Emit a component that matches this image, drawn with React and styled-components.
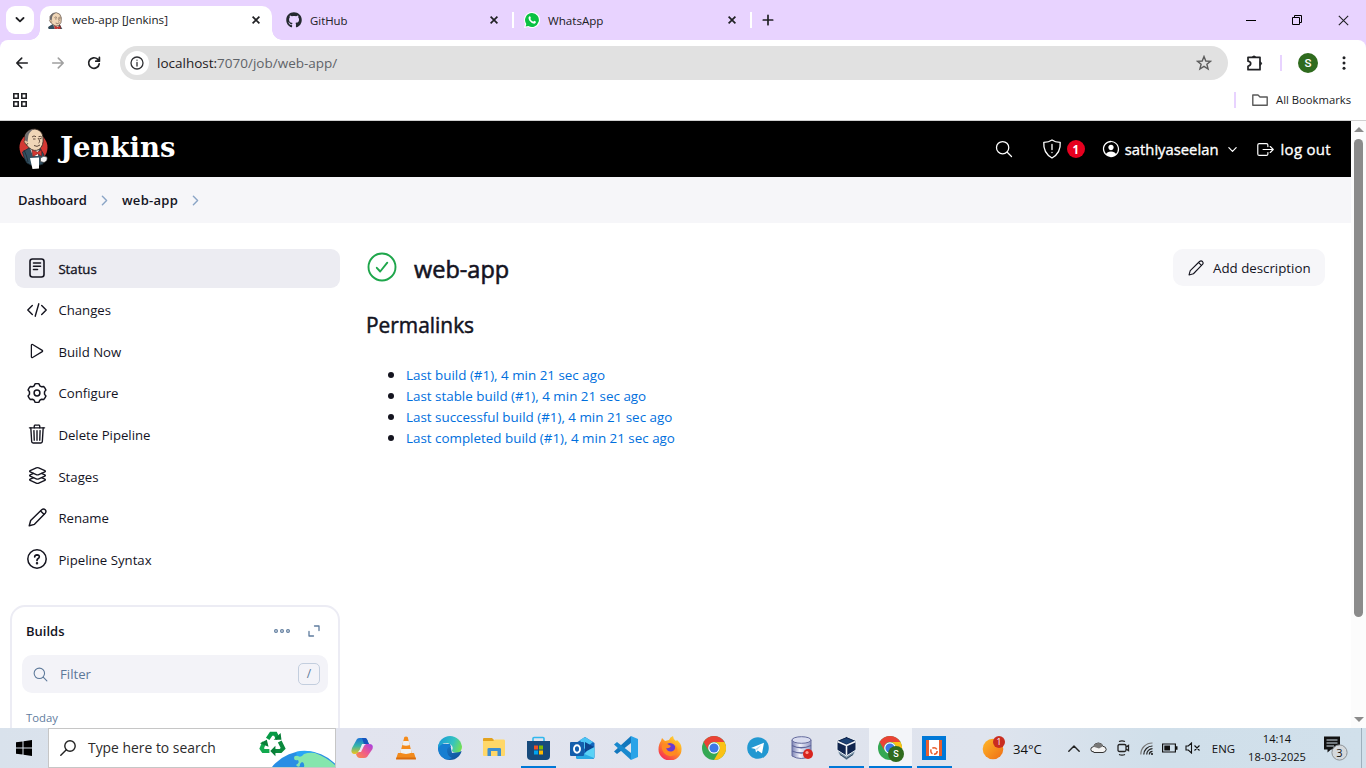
import React from 'react';
import styled, { createGlobalStyle } from 'styled-components';
import { FaGithub } from 'react-icons/fa';
import {
  IoPlayOutline, IoTrashOutline, IoLayersOutline, IoSearchOutline,
  IoPersonCircleOutline, IoExitOutline, IoChevronForward, IoChevronDown,
} from 'react-icons/io5';

const Global = createGlobalStyle`
  * { box-sizing: border-box; }
  body { margin: 0; overflow: hidden; background: #fff; font-family: "Open Sans", "Noto Sans", sans-serif; color: #14141f; }
  svg { display: block; flex: none; }
`;

const Screen = styled.div`
  width: 1366px;
  height: 768px;
  display: flex;
  flex-direction: column;
  overflow: hidden;
`;

const Text = styled.span`
  font-size: ${(p) => p.$size || 13.2}px;
  font-weight: ${(p) => p.$weight || 400};
  color: ${(p) => p.$color || 'inherit'};
  letter-spacing: ${(p) => p.$track || 0}px;
  -webkit-text-stroke: ${(p) => (p.$medium ? '0.35px currentColor' : '0')};
  padding-top: ${(p) => p.$drop || 0}px;
  line-height: 1.35;
  white-space: nowrap;
`;

const Spacer = styled.div`
  flex: 1;
`;

/* ---------- Browser chrome ---------- */

const TabStrip = styled.div`
  height: 40px;
  flex: none;
  background: #e8d3ff;
  display: flex;
  align-items: center;
  padding-left: 6px;
`;

const TabSearch = styled.div`
  width: 28px;
  height: 28px;
  border-radius: 9px;
  background: #fff;
  display: grid;
  place-items: center;
  margin-right: 6px;
`;

const Tab = styled.div`
  width: ${(p) => p.$w}px;
  height: ${(p) => (p.$active ? 34 : 40)}px;
  align-self: flex-end;
  display: flex;
  align-items: center;
  padding: ${(p) => (p.$active ? '0 12px 6px 8px' : `0 14px 0 ${p.$pl}px`)};
  background: ${(p) => (p.$active ? '#fff' : 'transparent')};
  border-radius: 10px 10px 0 0;
  position: relative;
  gap: 8px;
  ${(p) => p.$active && `
    &::before, &::after {
      content: '';
      position: absolute;
      bottom: 0;
      width: 10px;
      height: 10px;
    }
    &::before { left: -10px; background: radial-gradient(circle at 0 0, transparent 9.5px, #fff 10px); }
    &::after { right: -10px; background: radial-gradient(circle at 100% 0, transparent 9.5px, #fff 10px); }
  `}
`;

const TabDivider = styled.div`
  width: 2px;
  height: 16px;
  background: ${(p) => p.$color || '#fff'};
`;

const WindowButtons = styled.div`
  display: flex;
`;

const WindowButton = styled.div`
  width: 46px;
  height: 40px;
  display: grid;
  place-items: center;
`;

const ToolbarWrap = styled.div`
  background: #e8d3ff;
  flex: none;
`;

const Toolbar = styled.div`
  height: 46px;
  background: #fff;
  border-radius: 8px 8px 0 0;
  display: flex;
  align-items: center;
  padding: 0 14px;
`;

const NavButtons = styled.div`
  display: flex;
  gap: 20px;
  width: 106px;
`;

const AddressBar = styled.div`
  width: 1108px;
  height: 34px;
  border-radius: 17px;
  background: #e1e1e1;
  display: flex;
  align-items: center;
  padding: 0 16px 0 5px;
`;

const SiteInfo = styled.div`
  width: 24px;
  height: 24px;
  border-radius: 50%;
  background: #fff;
  display: grid;
  place-items: center;
  margin-right: 8px;
`;

const Avatar = styled.div`
  width: ${(p) => p.$d}px;
  height: ${(p) => p.$d}px;
  border-radius: 50%;
  background: #2f6b1e;
  color: #fff;
  display: grid;
  place-items: center;
  font: 500 ${(p) => p.$fs}px Roboto, sans-serif;
`;

const ToolbarActions = styled.div`
  display: flex;
  align-items: center;
  margin-left: 18px;
`;

const BookmarkBar = styled.div`
  height: 35px;
  flex: none;
  border-bottom: 1px solid #d0d0d0;
  display: flex;
  align-items: center;
  padding: 0 15px 6px 13px;
`;

const AllBookmarks = styled.div`
  display: flex;
  align-items: center;
  gap: 8px;
  margin-left: 16px;
`;

/* ---------- Page ---------- */

const Viewport = styled.div`
  height: 607px;
  flex: none;
  display: flex;
  overflow: hidden;
`;

const Page = styled.div`
  width: 1351px;
  height: 607px;
  overflow: hidden;
  display: flex;
  flex-direction: column;
`;

const Scrollbar = styled.div`
  width: 15px;
  background: #fcfcfc;
  display: flex;
  flex-direction: column;
  align-items: center;
  padding: 6px 0 6px;
`;

const Thumb = styled.div`
  width: 9px;
  height: 478px;
  border-radius: 5px;
  background: #8b8b8b;
  margin-top: 7px;
`;

const Header = styled.header`
  height: 56px;
  flex: none;
  background: #000;
  color: #fff;
  display: flex;
  align-items: center;
  padding: 0 20px 0 18px;
`;

const Brand = styled.div`
  display: flex;
  align-items: center;
  gap: 12px;
`;

const Wordmark = styled.span`
  font-family: "DejaVu Serif", serif;
  font-weight: 700;
  font-size: 27.5px;
  letter-spacing: 0;
  line-height: 30px;
  padding-bottom: 4px;
`;

const HeaderGroup = styled.div`
  display: flex;
  align-items: center;
  gap: ${(p) => p.$gap}px;
  margin-left: ${(p) => p.$ml}px;
`;

const Alert = styled.span`
  width: 18px;
  height: 18px;
  border-radius: 50%;
  background: #e6001f;
  display: grid;
  place-items: center;
  font-size: 11.5px;
  font-weight: 700;
`;

const Breadcrumbs = styled.nav`
  height: 46px;
  flex: none;
  background: #f6f6f9;
  display: flex;
  align-items: center;
  padding-left: 18px;
  gap: 10px;
`;

const Body = styled.div`
  display: flex;
  flex: 1;
  padding-top: 26px;
`;

const Sidebar = styled.aside`
  width: 340px;
  flex: none;
`;

const Tasks = styled.div`
  display: flex;
  flex-direction: column;
  gap: 2.6px;
  padding-left: 15px;
`;

const Task = styled.div`
  height: 39px;
  border-radius: 9px;
  background: ${(p) => (p.$active ? '#ececf2' : 'transparent')};
  display: flex;
  align-items: center;
  padding-left: 11px;
  gap: 10.4px;
`;

const TaskIcon = styled.span`
  width: 22px;
  height: 22px;
  display: grid;
  place-items: center;
  margin-bottom: 1px;
`;

const BuildsCard = styled.section`
  margin: 26px 0 0 10px;
  width: 330px;
  height: 200px;
  border: 2px solid #ececf4;
  border-radius: 15px;
  padding: 15px 10px;
`;

const BuildsHead = styled.div`
  height: 20px;
  display: flex;
  align-items: center;
  padding: 0 8px 0 4px;
  color: #5f7c9e;
`;

const HeadActions = styled.div`
  display: flex;
  align-items: center;
  gap: 18px;
  padding-bottom: 3px;
`;

const Filter = styled.div`
  height: 38px;
  margin: 13px 0 14px;
  border-radius: 10px;
  background: #f3f3f8;
  color: #5c7899;
  display: flex;
  align-items: center;
  padding: 0 8px 0 10px;
`;

const Key = styled.span`
  width: 22px;
  height: 22px;
  border: 1px solid #c3cede;
  border-radius: 5px;
  display: grid;
  place-items: center;
`;

const Indent = styled.div`
  padding-left: 4px;
  line-height: 18px;
`;

const Main = styled.main`
  flex: 1;
  padding: 0 26px 0 26px;
`;

const TitleRow = styled.div`
  height: 37px;
  display: flex;
  align-items: center;
`;

const StatusIcon = styled.span`
  padding-bottom: 2px;
`;

const Title = styled.h1`
  font-size: 23.5px;
  font-weight: 400;
  -webkit-text-stroke: 0.6px currentColor;
  margin: 2px 0 0 16px;
  line-height: 32px;
`;

const AddButton = styled.div`
  width: 152px;
  height: 37px;
  border-radius: 10px;
  background: #f6f6f9;
  display: flex;
  align-items: center;
  gap: 9px;
  padding-left: 15px;
`;

const SubTitle = styled.h2`
  font-size: 20.9px;
  font-weight: 400;
  -webkit-text-stroke: 0.5px currentColor;
  line-height: 28px;
  margin: 25px 0 26px;
`;

const Links = styled.ul`
  margin: 0;
  padding: 0;
  list-style: none;
`;

const LinkItem = styled.li`
  height: 21px;
  display: flex;
  align-items: center;
  padding-left: 22px;
  gap: 12px;
  &::before {
    content: '';
    width: 6px;
    height: 6px;
    border-radius: 50%;
    background: #14141f;
    margin-top: -1px;
  }
`;

/* ---------- Taskbar ---------- */

const TaskbarRoot = styled.footer`
  height: 40px;
  flex: none;
  background: linear-gradient(90deg, #d9e2ec 0, #e2e4ef 25%, #dfe3ed 60%, #dfe4ee 72%, #d0dfea 85%, #d1e0eb 100%);
  display: flex;
  color: #111;
`;

const Start = styled.div`
  width: 48px;
  display: grid;
  place-items: center;
`;

const SearchBox = styled.div`
  width: 288px;
  height: 40px;
  background: #fff;
  border: 1px solid #c6c6c6;
  display: flex;
  align-items: center;
  padding-left: 11px;
  gap: 12px;
  overflow: hidden;
`;

const Apps = styled.div`
  display: flex;
  margin-left: 4px;
`;

const AppSlot = styled.div`
  width: 44px;
  height: 40px;
  display: flex;
  flex-direction: column;
  align-items: center;
  justify-content: space-between;
  padding-top: 8px;
  background: ${(p) => (p.$active ? 'linear-gradient(90deg, transparent 1px, #f3f5f9 1px)' : 'transparent')};
`;

const Running = styled.div`
  width: ${(p) => (p.$wide ? 43 : 35)}px;
  height: 2px;
  background: #0078d7;
`;

const Tray = styled.div`
  display: flex;
  align-items: center;
`;

const TrayItem = styled.div`
  margin-left: ${(p) => p.$ml || 0}px;
  margin-bottom: ${(p) => p.$lift || 0}px;
`;

const Clock = styled.div`
  width: 60px;
  display: flex;
  flex-direction: column;
  align-items: center;
  margin-left: 12px;
  line-height: 18px;
  span { line-height: 18px; }
`;

const Peek = styled.div`
  width: 5px;
  height: 40px;
  margin-left: 12px;
  border-left: 1px solid #9fb0bd;
`;

/* ---------- Drawings ---------- */

const Butler = ({ w, h, head }) => (
  <svg width={w} height={h} viewBox={head ? '3 0 25 27' : '-1 0 30 42'}>
    {!head && <ellipse cx="14.500" cy="19.500" rx="14" ry="14.500" fill="#d33833" />}
    <path d="M3.500 24 L10 20 L21 20 L25 27 L24 36 Q15 40 8 35 Q5 31 3.500 24Z" fill="#335061" stroke="#1b2b35" strokeWidth=".8" />
    <path d="M11 20 L14 28 L19 28 L20 20Z" fill="#f7f3ee" />
    <path d="M6 7 Q9 1 16 1 Q23 2 24 9 Q25 18 20 21.500 Q15 24 10.500 20 Q6 17 6 11Z" fill="#f0d6b7" stroke="#3b2c25" strokeWidth=".9" />
    <path d="M6.500 13 Q4.500 8 8 4.500 Q11 1 15 1 Q10 4 9.300 8 Q9 11 8.500 14Z" fill="#6d6b6d" />
    <path d="M6 12 Q4 13 6.500 16 Q8 18 9 15" fill="#e8c39e" stroke="#3b2c25" strokeWidth=".7" />
    <path d="M13 9 q2-2 4-.3 M19.500 8.700 q2-1 3.500.5 M14 11 h2.500 M20.500 10.600 h2 M19 10 q3 4 .5 5 M15 17.500 q3 2 6-.5" stroke="#4d3a2f" strokeWidth=".9" fill="none" />
    <path d="M13 22 L18.500 24.200 L22.500 22 L22.500 28 L18.500 25.800 L14 28.500Z" fill="#d33833" stroke="#81201d" strokeWidth=".7" />
    {!head && (
      <>
        <path d="M11 30 L20 29.500 L20 40.500 L13.500 41Z" fill="#fff" />
        <path d="M21.500 30 q3-3 6.500-1 q1 4-3 5.500 l-3.500-1z" fill="#f6f6f6" stroke="#333" strokeWidth=".6" />
        <path d="M5 22 Q8 28 9 34" stroke="#20313c" strokeWidth="1" fill="none" />
      </>
    )}
  </svg>
);

const Close = ({ s = 8, w = 1.7 }) => (
  <svg width={s} height={s} viewBox="0 0 8 8"><path d="M.6.6 7.400 7.400M7.400.6.6 7.400" stroke="#202124" strokeWidth={w} /></svg>
);

const Stroke = ({ w, h = w, sw = 1.5, color = 'currentColor', children, box }) => (
  <svg width={w} height={h} viewBox={box || `0 0 ${w} ${h}`} fill="none" stroke={color} strokeWidth={sw} strokeLinecap="round" strokeLinejoin="round">{children}</svg>
);

const Pencil = ({ s, sw = 1.5 }) => (
  <Stroke w={s} box="0 0 20 20" sw={sw}>
    <path d="M1.300 18.700 2.800 13.200 14.400 1.900Q16.400.3 18.100 1.900 19.700 3.600 18.100 5.600L6.800 17.200Z" />
    <path d="M13.300 3.200 16.800 6.700" />
  </Stroke>
);

const Gear = () => (
  <Stroke w={20} box="0 0 20 20" sw={1.5}>
    <path d="M7.200 2.800 8 .9Q10 .3 12 .9L12.800 2.800Q13.700 3.400 14.700 3.800L16.700 3.500Q18.200 5 18.900 7L17.600 8.600Q17.400 10 17.600 11.400L18.900 13Q18.200 15 16.700 16.500L14.700 16.200Q13.600 16.600 12.800 17.300L12 19.100Q10 19.700 8 19.100L7.200 17.300Q6.400 16.600 5.300 16.200L3.300 16.500Q1.800 15 1.100 13L2.400 11.400Q2.600 10 2.400 8.600L1.100 7Q1.800 5 3.300 3.500L5.300 3.800Q6.400 3.400 7.200 2.800Z" />
    <circle cx="10" cy="10" r="2.900" />
  </Stroke>
);

const ChromeLogo = () => (
  <svg width="24" height="24" viewBox="0 0 24 24">
    <circle cx="12" cy="12" r="12" fill="#34a853" />
    <path d="M1.600 6A12 12 0 0 1 22.400 6H12A6 6 0 0 0 6.800 15Z" fill="#ea4335" />
    <path d="M22.400 6A12 12 0 0 1 12 24L17.200 15A6 6 0 0 0 12 6Z" fill="#fbc116" />
    <circle cx="12" cy="12" r="5.800" fill="#fff" />
    <circle cx="12" cy="12" r="4.600" fill="#3b78e7" />
  </svg>
);

const BadgeHolder = styled.div`
  position: relative;
`;

const BadgeSlot = styled.div`
  position: absolute;
  right: -2px;
  bottom: -2px;
`;

const appIcons = [
  {
    id: 'copilot',
    art: (
      <svg width="24" height="24" viewBox="0 0 24 24">
        <defs>
          <linearGradient id="cpA" x1="0" y1="0" x2="0" y2="1"><stop offset="0" stopColor="#1b72d8" /><stop offset=".5" stopColor="#36b6a8" /><stop offset="1" stopColor="#f0c419" /></linearGradient>
          <linearGradient id="cpB" x1="1" y1="0" x2="0" y2="1"><stop offset="0" stopColor="#a13ee8" /><stop offset=".5" stopColor="#ef5a8c" /><stop offset="1" stopColor="#fb8c47" /></linearGradient>
        </defs>
        <path d="M7 3Q8 2 10 2H15Q17 2 18 6L19 8H15Q12 8 11 11L9 16Q8 18 5 18Q0 18 2 12Z" fill="url(#cpA)" />
        <path d="M12 2H15Q17 2 18 6L19 8H14Z" fill="#1553bd" />
        <path d="M17 21Q16 22 14 22H10Q7 22 6 18L9 16Q10 15 11 12L13 8H19Q24 8 22.500 13Z" fill="url(#cpB)" />
        <path d="M12 8H16Q14 9 13 12L11 16H8Q10 14 11 11Z" fill="#e8edf5" />
      </svg>
    ),
  },
  {
    id: 'vlc',
    art: (
      <svg width="22" height="24" viewBox="0 0 22 24">
        <path d="M3 17H19L21 23H1Z" fill="#f18a1c" />
        <path d="M9.300 1Q11 0 12.700 1L17 18Q11 21 5 18Z" fill="#f48b1b" />
        <path d="M8.300 5H13.700L14.800 9Q11 10.500 7.200 9ZM6.200 13H15.800L16.700 16.800Q11 19 5.300 16.800Z" fill="#eef0f2" />
        <path d="M1.500 21.500H20.500L21 23.500H1Z" fill="#d96c0d" />
      </svg>
    ),
  },
  {
    id: 'edge',
    art: (
      <svg width="24" height="24" viewBox="0 0 24 24">
        <defs>
          <linearGradient id="edA" x1="0" y1=".3" x2="1" y2=".6"><stop offset="0" stopColor="#199bd7" /><stop offset=".6" stopColor="#35c3c0" /><stop offset="1" stopColor="#72df55" /></linearGradient>
          <linearGradient id="edB" x1="0" y1="0" x2="1" y2="1"><stop offset="0" stopColor="#1785d7" /><stop offset="1" stopColor="#124c92" /></linearGradient>
          <clipPath id="edC"><circle cx="12" cy="12" r="12" /></clipPath>
        </defs>
        <g clipPath="url(#edC)">
          <path d="M0 8H12L14 17 24 15V24H0Z" fill="url(#edB)" />
          <path d="M0 12Q4 7 9.500 8Q13 9 13 11Q9.500 10.500 9 14Q8.500 19 14 22Q10 24 7 23.500Q0 20 0 12Z" fill="#167ed1" />
          <path d="M0 0H24V11Q24 16.500 18 16.500Q14 16.300 14 14.500Q16 11 12.500 8.500Q6 4.500 0 12Z" fill="url(#edA)" />
        </g>
      </svg>
    ),
  },
  {
    id: 'explorer',
    art: (
      <svg width="22" height="22" viewBox="0 0 22 22">
        <path d="M0 3Q0 2 1 2H9L11 4H21V19H0Z" fill="#e3a21d" />
        <path d="M0 5H10L12 3.500H21Q22 3.500 22 5V19Q22 20 21 20H1Q0 20 0 19Z" fill="#ffd768" />
        <path d="M4.500 20V13Q4.500 12 6 12H16.500Q18 12 18 13V20H14.500V15H8V20Z" fill="#3e8ed0" />
      </svg>
    ),
  },
  {
    id: 'store', run: true,
    art: (
      <svg width="23" height="24" viewBox="0 0 23 24">
        <path d="M6 6V2.500Q6 1.500 7 1.500H16Q17 1.500 17 2.500V6" fill="none" stroke="#31b8ee" strokeWidth="1.600" />
        <path d="M0 5H23V20Q23 24 19 24H4Q0 24 0 20Z" fill="#174a7c" />
        <path d="M7 9.500H11V13.500H7Z" fill="#f25022" /><path d="M12 9.500H16V13.500H12Z" fill="#7fba00" />
        <path d="M7 14.500H11V18.500H7Z" fill="#00a4ef" /><path d="M12 14.500H16V18.500H12Z" fill="#ffb900" />
      </svg>
    ),
  },
  {
    id: 'outlook',
    art: (
      <svg width="25" height="24" viewBox="0 0 25 24">
        <path d="M6 7 15 1 24.500 7V21Q24.500 23 22.500 23H8Q6 23 6 21Z" fill="#1267bd" />
        <path d="M10 4 15 1 23 6 14 13Z" fill="#4bc3f4" />
        <path d="M15 6 24 11 15 16Z" fill="#0d4690" />
        <path d="M24.500 11V22L9 23 17 15Z" fill="#5bd2f6" /><path d="M7 15 24 22 22 23H8Q6 23 6 21Z" fill="#2baae4" />
        <rect x="0" y="6" width="14" height="14" rx="1" fill="#145eac" />
        <ellipse cx="7" cy="13" rx="3" ry="3.700" fill="none" stroke="#fff" strokeWidth="1.900" />
      </svg>
    ),
  },
  {
    id: 'code',
    art: (
      <svg width="24" height="24" viewBox="0 0 24 24">
        <path d="M17 0V7L3 18 0 15.500Z" fill="#1277bd" />
        <path d="M17 24V17L3 6 0 8.500Z" fill="#1989ce" />
        <path d="M17 0 24 3V21L17 24Z" fill="#2aa3e8" />
      </svg>
    ),
  },
  {
    id: 'firefox',
    art: (
      <svg width="24" height="24" viewBox="0 0 24 24">
        <defs><linearGradient id="ffA" x1=".9" y1="0" x2=".2" y2="1"><stop offset="0" stopColor="#ffe43b" /><stop offset=".45" stopColor="#ff9a1f" /><stop offset="1" stopColor="#f5255b" /></linearGradient></defs>
        <path d="M3 5 4 2 7 5 11 4Q12 1 15 0Q15 3 18 5L19 4Q24 8 23.500 13.500A11.500 11 0 0 1 .5 13.500Q.5 8 3 5Z" fill="url(#ffA)" />
        <circle cx="12" cy="12.500" r="5.500" fill="#6b3bd1" />
        <path d="M4 9Q8 6 11 9L13 10Q11 13 8 12Q10 17 15 15Q18 13 17 9Q22 15 17 19Q10 22 6 17Q3 13 4 9Z" fill="#ff8a20" />
      </svg>
    ),
  },
  { id: 'chrome', art: <ChromeLogo /> },
  {
    id: 'telegram',
    art: (
      <svg width="22" height="24" viewBox="0 0 22 24">
        <circle cx="11" cy="12" r="10.800" fill="#2298d1" />
        <path d="M4 12 17 6.800 15 17.500 10.800 14.500 9 16.500 8.300 13Z" fill="#fff" />
        <path d="M8.300 13 14.500 9 10 14Z" fill="#b9d9ea" />
      </svg>
    ),
  },
  {
    id: 'database',
    art: (
      <svg width="23" height="24" viewBox="0 0 23 24">
        <defs><linearGradient id="dbA"><stop offset="0" stopColor="#7c83b5" /><stop offset=".4" stopColor="#f2f3fc" /><stop offset="1" stopColor="#9298c5" /></linearGradient></defs>
        <path d="M1 4V20Q10 25 20 20V4Z" fill="url(#dbA)" stroke="#646a9c" />
        <ellipse cx="10.500" cy="4" rx="9.500" ry="3.300" fill="#d9dcef" stroke="#646a9c" />
        <path d="M1 9.500Q10 14 20 9.500M1 15Q10 19 20 15" fill="none" stroke="#5f669b" strokeWidth="1.300" />
        <circle cx="17" cy="18" r="5" fill="#d8241e" /><circle cx="16" cy="16.500" r="1.600" fill="#ff9d91" />
      </svg>
    ),
  },
  {
    id: 'virtualbox', run: true,
    art: (
      <svg width="21" height="24" viewBox="0 0 21 24">
        <path d="M2 13 10.500 18 19 13 18 18 10.500 24 3 18Z" fill="#7d96aa" />
        <path d="M1 4.500 10.500.5 20 4.500V14L10.500 20 1 14Z" fill="#10254e" stroke="#eef3f7" />
        <path d="M3.500 5 10.500 2.300 17.500 5 10.500 8Z" fill="#1c4274" />
        <path d="M1.500 5.500 10.500 9.600V19.500M19.500 5.500 10.500 9.600" stroke="#f2f6f9" strokeWidth="1.600" fill="none" />
        <path d="M4 18.500 10.500 22.500 17 18.500" stroke="#334961" fill="none" />
      </svg>
    ),
  },
  {
    id: 'chrome-profile', run: true, active: true,
    art: <BadgeHolder><ChromeLogo /><BadgeSlot><Avatar $d={16} $fs={9}>S</Avatar></BadgeSlot></BadgeHolder>,
  },
  {
    id: 'snip', run: true,
    art: (
      <svg width="24" height="24" viewBox="0 0 24 24">
        <path d="M0 0H24V24H0Z" fill="#0078d7" />
        <path d="M4.500 4H19.500V20H4.500Z" fill="#fff" /><path d="M4 4H7V20H4ZM17 4H20V20H17Z" fill="#e95f2e" />
        <circle cx="12" cy="15" r="3.200" fill="none" stroke="#e95f2e" strokeWidth="1.500" strokeDasharray="5 1.500" />
      </svg>
    ),
  },
];

const SearchArt = () => (
  <svg width="86" height="38" viewBox="0 0 86 38">
    <g transform="translate(7.500 .5) scale(.86)">
      <g fill="none" strokeWidth="4.800">
        <path d="M13 11 17 5H22L25 11" stroke="#079a46" /><path d="M27 14 31 22 28 25H21" stroke="#0b8a3d" /><path d="M15 25H8L6 22 9 15" stroke="#12a94e" />
      </g>
      <path d="M20 12H29L28 4ZM22 19V31L16 25ZM4 16 12 12 14 20Z" fill="#087f38" />
    </g>
    <circle cx="56" cy="64" r="42" fill="#288ee4" />
    <path d="M47 23Q57 20 67 24L63 27Q56 25 50 29L48 27Z" fill="#28a6f5" />
    <path d="M45 29Q45 26 49 27Q52 29 55 25Q60 23 66 24Q77 28 86 36V38H55Q56 34 53 33Q50 35 51 37Q49 39 47 36Q51 34 49 31Q45 32 45 29Z" fill="#85e6ad" />
  </svg>
);

/* ---------- Data ---------- */

const tasks = [
  { label: 'Status', active: true, icon: <Stroke w={16} h={20} sw={1.6}><rect x="1" y="1" width="14" height="18" rx="2.500" /><path d="M4.500 5H11.500M4.500 8.300H11.500M4.500 11.500H8.500" /></Stroke> },
  { label: 'Changes', icon: <Stroke w={20} h={14} sw={1.4}><path d="M5.300 2.600.8 7 5.300 11.400M14.700 2.600 19.200 7 14.700 11.400M11.800.8 8.200 13.200" /></Stroke> },
  { label: 'Build Now', icon: <IoPlayOutline size={20} /> },
  { label: 'Configure', icon: <Gear /> },
  { label: 'Delete Pipeline', icon: <IoTrashOutline size={22} /> },
  { label: 'Stages', icon: <IoLayersOutline size={21} /> },
  { label: 'Rename', icon: <Pencil s={19} /> },
  { label: 'Pipeline Syntax', icon: <Stroke w={20} sw={1.5}><circle cx="10" cy="10" r="9.200" /><path d="M7.700 7.900Q7.900 5.900 10 5.900 12.400 6 12.300 8 12.200 9 10.900 9.800 10 10.400 10 11.500" strokeWidth="1.700" /><circle cx="10" cy="14.200" r=".5" fill="currentColor" /></Stroke> },
];

const builds = ['Last build', 'Last stable build', 'Last successful build', 'Last completed build'];

/* ---------- Sections ---------- */

const Browser = () => (
  <>
    <TabStrip>
      <TabSearch><Stroke w={10} h={6} sw={1.8} color="#202124"><path d="M1.500 1 5 4.400 8.500 1" /></Stroke></TabSearch>
      <Tab $w={232} $active>
        <Butler w={16} h={17} head />
        <Text $size={11.6} $color="#202124">web-app [Jenkins]</Text>
        <Spacer />
        <Close />
      </Tab>
      <Tab $w={240} $pl={14}>
        <FaGithub size={16} color="#24292f" />
        <Text $size={11.4} $color="#202124" $drop={1}>GitHub</Text>
        <Spacer />
        <Close />
      </Tab>
      <TabDivider />
      <Tab $w={236} $pl={10}>
        <svg width="16" height="16" viewBox="0 0 16 16">
          <path d="M8 0A8 8 0 1 1 4.200 15L0 16 1.100 12A8 8 0 0 1 8 0Z" fill="#fff" />
          <path d="M8 1.100A6.900 6.900 0 1 1 4.400 13.900L1.600 14.500 2.300 11.900A6.900 6.900 0 0 1 8 1.100Z" fill="#0ac143" />
          <path d="M4.600 5.300Q5.500 3.500 6.300 4.600L6.900 6 6.300 7Q7.400 9.100 9.300 9.800L10.200 8.800 12 9.700Q12 11.400 10.300 11.700Q7.500 11.600 5.300 8.500Q4.300 6.800 4.600 5.300Z" fill="#fff" />
        </svg>
        <Text $size={11.6} $color="#202124" $drop={1}>WhatsApp</Text>
        <Spacer />
        <Close />
      </Tab>
      <TabDivider />
      <HeaderGroup $ml={10} $gap={0}><Stroke w={12} sw={1.7} color="#202124"><path d="M6 1.300V10.700M1.300 6H10.700" /></Stroke></HeaderGroup>
      <Spacer />
      <WindowButtons>
        <WindowButton><svg width="10" height="1" viewBox="0 0 10 1"><path d="M0 0H10V1H0Z" /></svg></WindowButton>
        <WindowButton><svg width="10" height="10" viewBox="0 0 10 10" fill="none" stroke="#000"><path d="M.5 2.500H7.500V9.500H.5ZM2.500 2.500V.5H9.500V7.500H7.500" /></svg></WindowButton>
        <WindowButton><Close s={11} w={0.8} /></WindowButton>
      </WindowButtons>
    </TabStrip>
    <ToolbarWrap>
      <Toolbar>
        <NavButtons>
          <Stroke w={16} sw={1.6} color="#202124"><path d="M13.300 8H3M7.700 3.100 2.800 8 7.700 12.900" /></Stroke>
          <Stroke w={16} sw={1.6} color="#a0a0a0"><path d="M2.700 8H13M8.300 3.100 13.200 8 8.300 12.900" /></Stroke>
          <Stroke w={16} sw={1.7} color="#202124"><path d="M13.200 8.800A5.300 5.300 0 1 1 11.600 4.200L13.200 5.800M13.400 2.400V6.200H9.800" /></Stroke>
        </NavButtons>
        <AddressBar>
          <SiteInfo><Stroke w={14} sw={1.3} color="#303134"><circle cx="7" cy="7" r="6" /><path d="M7 6.500V10M7 4.100V4.200" /></Stroke></SiteInfo>
          <Text $size={13.5} $color="#5f6368" $drop={1}><Text $size={13.5} $color="#1f2023">localhost:</Text>7070/job/web-app/</Text>
          <Spacer />
          <Stroke w={16} sw={1.4} color="#5c5c5c"><path d="M8 1.500 9.800 6 14.500 6.300 10.900 9.300 12.100 14 8 11.400 3.900 14 5.100 9.300 1.500 6.300 6.200 6Z" strokeLinejoin="miter" /></Stroke>
        </AddressBar>
        <ToolbarActions>
          <Stroke w={18} sw={1.7} color="#202124"><path d="M2 3.300H14V15.700H2V12.200Q4.700 11.500 4.700 9.600 4.700 7.800 2 7.200Z" /><path d="M6.300 3Q8 .5 9.700 3ZM14.500 7.800Q17 9.500 14.500 11.200Z" fill="#202124" strokeWidth="1" /></Stroke>
          <HeaderGroup $ml={16} $gap={16}><TabDivider $color="#e8d3ff" /><Avatar $d={20} $fs={11.5}>S</Avatar></HeaderGroup>
          <HeaderGroup $ml={24} $gap={0}><svg width="4" height="14" viewBox="0 0 4 14" fill="#202124"><circle cx="2" cy="1.700" r="1.500" /><circle cx="2" cy="7" r="1.500" /><circle cx="2" cy="12.300" r="1.500" /></svg></HeaderGroup>
        </ToolbarActions>
      </Toolbar>
    </ToolbarWrap>
    <BookmarkBar>
      <svg width="14" height="14" viewBox="0 0 14 14" fill="none" stroke="#202124" strokeWidth="1.600"><path d="M.8.8H5.200V5.200H.8ZM8.800.8H13.200V5.200H8.800ZM.8 8.800H5.200V13.200H.8ZM8.800 8.800H13.200V13.200H8.800Z" /></svg>
      <Spacer />
      <TabDivider $color="#e8d3ff" />
      <AllBookmarks>
        <Stroke w={16} h={12} sw={1.4} color="#5a5a5a"><path d="M.8 1H6L8 3H15.200V11.200H.8Z" /></Stroke>
        <Text $size={11.25} $color="#202124">All Bookmarks</Text>
      </AllBookmarks>
    </BookmarkBar>
  </>
);

const JenkinsPage = () => (
  <Page>
    <Header>
      <Brand><Butler w={30} h={42} /><Wordmark>Jenkins</Wordmark></Brand>
      <Spacer />
      <IoSearchOutline size={20} />
      <HeaderGroup $ml={28} $gap={5}>
        <Stroke w={20} sw={1.3}><path d="M10 1Q7 3.300 1.800 3.300 1 14 10 19 19 14 18.200 3.300 13 3.300 10 1Z" /><path d="M10 5.500V10.500M10 13.500V13.600" /></Stroke>
        <Alert>1</Alert>
      </HeaderGroup>
      <HeaderGroup $ml={16} $gap={4}><IoPersonCircleOutline size={20} /><Text $size={14.8} $medium $drop={1}>sathiyaseelan</Text></HeaderGroup>
      <HeaderGroup $ml={8} $gap={0}><IoChevronDown size={13} /></HeaderGroup>
      <HeaderGroup $ml={17} $gap={5}><IoExitOutline size={19} /><Text $size={15} $track={0.3} $medium $drop={1}>log out</Text></HeaderGroup>
    </Header>
    <Breadcrumbs>
      <Text $size={13} $weight={600} $drop={2}>Dashboard</Text>
      <IoChevronForward size={15} color="#8ba5c6" />
      <Text $size={13} $track={0.3} $weight={600} $drop={2}>web-app</Text>
      <IoChevronForward size={15} color="#8ba5c6" />
    </Breadcrumbs>
    <Body>
      <Sidebar>
        <Tasks>
          {tasks.map((t) => (
            <Task key={t.label} $active={t.active}>
              <TaskIcon>{t.icon}</TaskIcon>
              <Text $medium={t.active} $drop={2}>{t.label}</Text>
            </Task>
          ))}
        </Tasks>
        <BuildsCard>
          <BuildsHead>
            <Text $size={13} $weight={600} $color="#14141f">Builds</Text>
            <Spacer />
            <HeadActions>
              <Stroke w={16} h={6} sw={1.2}><circle cx="2" cy="3" r="1.400" /><circle cx="8" cy="3" r="1.400" /><circle cx="14" cy="3" r="1.400" /></Stroke>
              <Stroke w={12} sw={1.3}><path d="M6.500 1H11V5.500M1 6.500V11H5.500" /></Stroke>
            </HeadActions>
          </BuildsHead>
          <Filter>
            <IoSearchOutline size={17} />
            <HeaderGroup $ml={11} $gap={0}><Text $drop={2}>Filter</Text></HeaderGroup>
            <Spacer />
            <Key><Text $size={12}>/</Text></Key>
          </Filter>
          <Indent><Text $size={11.3} $color="#5f7c9e">Today</Text></Indent>
        </BuildsCard>
      </Sidebar>
      <Main>
        <TitleRow>
          <StatusIcon><Stroke w={32} sw={1.9} color="#1ea64b"><circle cx="16" cy="16" r="13.500" /><path d="M10.800 16.800 14.200 20.500 21.300 11.700" /></Stroke></StatusIcon>
          <Title>web-app</Title>
          <Spacer />
          <AddButton><Pencil s={16} sw={1.4} /><Text $size={13.3} $drop={2}>Add description</Text></AddButton>
        </TitleRow>
        <SubTitle>Permalinks</SubTitle>
        <Links>
          {builds.map((b) => (
            <LinkItem key={b}><Text $color="#006fdd" $size={13.4}>{b} (#1), 4 min 21 sec ago</Text></LinkItem>
          ))}
        </Links>
      </Main>
    </Body>
  </Page>
);

const Taskbar = () => (
  <TaskbarRoot>
    <Start><svg width="16" height="16" viewBox="0 0 16 16"><path d="M0 2.300 6.500 1.400V7.500H0ZM7.500 1.200 16 0V7.500H7.500ZM0 8.500H6.500V14.600L0 13.700ZM7.500 8.500H16V16L7.500 14.800Z" /></svg></Start>
    <SearchBox>
      <Stroke w={16} sw={1.4} color="#222"><circle cx="10" cy="6" r="5.200" /><path d="M6.300 9.700.8 15.200" /></Stroke>
      <Text $size={13.9} $color="#2b2b2b" $drop={1}>Type here to search</Text>
      <Spacer />
      <SearchArt />
    </SearchBox>
    <Apps>
      {appIcons.map((a) => (
        <AppSlot key={a.id} $active={a.active}>{a.art}{a.run && <Running $wide={a.active} />}</AppSlot>
      ))}
    </Apps>
    <Spacer />
    <Tray>
      <svg width="24" height="24" viewBox="0 0 24 24">
        <defs><linearGradient id="sun" x1="0" y1="0" x2="1" y2="1"><stop offset="0" stopColor="#ffb928" /><stop offset="1" stopColor="#ee6c16" /></linearGradient></defs>
        <circle cx="11" cy="13" r="10.300" fill="url(#sun)" /><circle cx="17" cy="6" r="6" fill="#c92d20" />
        <text x="17" y="9" fontSize="8.500" fill="#fff" textAnchor="middle">1</text>
      </svg>
      <TrayItem $ml={7} $lift={1}><Text $size={13.1}>34°C</Text></TrayItem>
      <TrayItem $ml={26}><Stroke w={12} h={7} sw={1.4} color="#222"><path d="M.8 6.300 6 1 11.200 6.300" /></Stroke></TrayItem>
      <TrayItem $ml={10}><svg width="17" height="12" viewBox="0 0 17 12"><path d="M4 10Q.8 10 .8 7.300.8 5 3.500 4.700 4.500 1 8.300 1 12 1 13 4.300 16.200 4.700 16.200 7.500 16 10 13 10.500H4Z" fill="#f3f3f3" stroke="#333" /><path d="M3.500 4.700Q5 1 8.300 1 12 1 13 4.300L9 6.500Z" fill="#777" /></svg></TrayItem>
      <TrayItem $ml={9}><svg width="15" height="16" viewBox="0 0 15 16" fill="none" stroke="#222" strokeWidth="1.300"><path d="M3.500 4.500H8.500Q10 4.500 10 6V10Q10 11.500 8.500 11.500H3.500Q2 11.500 2 10V6Q2 4.500 3.500 4.500ZM10 7 12.500 5.500V10.500L10 9M3 1.500Q6 .3 9 1.500M3 14.500Q6 15.700 9 14.500" /></svg></TrayItem>
      <TrayItem $ml={9}><svg width="14" height="13" viewBox="0 0 14 13" fill="none" strokeWidth="1.200"><path d="M.8 12.500A11.500 11.500 0 0 1 12.500 1" stroke="#777" /><path d="M3.800 12.500A8.600 8.600 0 0 1 12.500 4M6.700 12.500A5.800 5.800 0 0 1 12.500 6.700M9.300 12.500A3.200 3.200 0 0 1 12.500 9.400" stroke="#222" /><circle cx="12" cy="12" r="1" fill="#111" /></svg></TrayItem>
      <TrayItem $ml={8}><svg width="16" height="10" viewBox="0 0 16 10"><path d="M.6 1H13.400V9H.6Z" fill="none" stroke="#111" strokeWidth="1.200" /><path d="M2.300 2.600H8V7.400H2.300ZM14 3.300H15.500V6.700H14Z" fill="#111" /></svg></TrayItem>
      <TrayItem $ml={7}><svg width="16" height="12" viewBox="0 0 16 12" fill="none" stroke="#111" strokeWidth="1.100"><path d="M1 4H3.300L6.500 1V11L3.300 8H1ZM9.500 3.500 14.500 8.500M14.500 3.500 9.500 8.500" /></svg></TrayItem>
      <TrayItem $ml={11} $lift={2}><Text $size={11.4}>ENG</Text></TrayItem>
      <Clock><Text $size={11.1}>14:14</Text><Text $size={11.1}>18-03-2025</Text></Clock>
      <TrayItem $ml={16}>
        <svg width="26" height="26" viewBox="0 0 26 26">
          <path d="M1 1.500H17V14.500H8L4.500 17.500V14.500H1Z" fill="#111" /><path d="M3.500 5H14.500M3.500 8H14.500M3.500 11H11" stroke="#d3e0ea" />
          <circle cx="16.500" cy="17.500" r="7.600" fill="#d5d9dc" stroke="#8d9296" />
          <text x="16.500" y="21.500" fontSize="11" fill="#111" textAnchor="middle" fontWeight="500">3</text>
        </svg>
      </TrayItem>
      <Peek />
    </Tray>
  </TaskbarRoot>
);

export default function App() {
  return (
    <Screen>
      <Global />
      <Browser />
      <Viewport>
        <JenkinsPage />
        <Scrollbar>
          <svg width="10" height="5" viewBox="0 0 10 5"><path d="M0 5 5 0 10 5Z" fill="#8b8b8b" /></svg>
          <Thumb />
          <Spacer />
          <svg width="10" height="5" viewBox="0 0 10 5"><path d="M0 0 5 5 10 0Z" fill="#8b8b8b" /></svg>
        </Scrollbar>
      </Viewport>
      <Taskbar />
    </Screen>
  );
}
